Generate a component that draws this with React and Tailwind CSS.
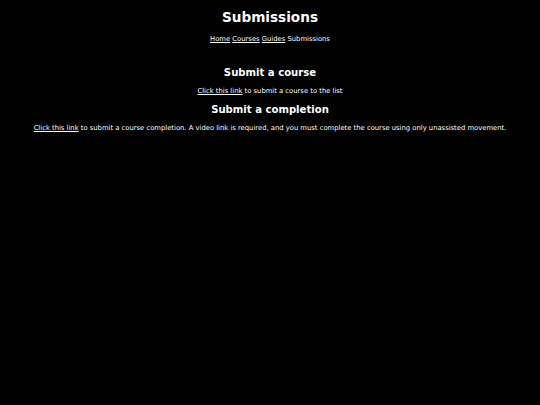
import React from 'react';

export default function App() {
    return (
        <div className="min-h-[405px] bg-black text-white text-center font-['DejaVu_Sans',sans-serif]">
            <h1 className="pt-[9px] text-[13.6px] leading-[16px] font-bold">Submissions</h1>
            <nav className="mt-[10px] text-[6.8px] leading-[8px]">
                <a href="#" className="underline">Home</a>{' '}
                <a href="#" className="underline">Courses</a>{' '}
                <a href="#" className="underline">Guides</a>{' '}
                <span>Submissions</span>
            </nav>
            <section>
                <h2 className="mt-[23.5px] text-[10.1px] leading-[12px] font-bold">Submit a course</h2>
                <p className="mt-[8.5px] text-[6.8px] leading-[8px]">
                    <a href="#" className="underline">Click this link</a> to submit a course to the list
                </p>
                <h2 className="mt-[8.5px] text-[10.1px] leading-[12px] font-bold">Submit a completion</h2>
                <p className="mt-[8px] text-[6.8px] leading-[8px]">
                    <a href="#" className="underline">Click this link</a> to submit a course completion. A video link is required, and you must complete the course using only unassisted movement.
                </p>
            </section>
        </div>
    );
}
